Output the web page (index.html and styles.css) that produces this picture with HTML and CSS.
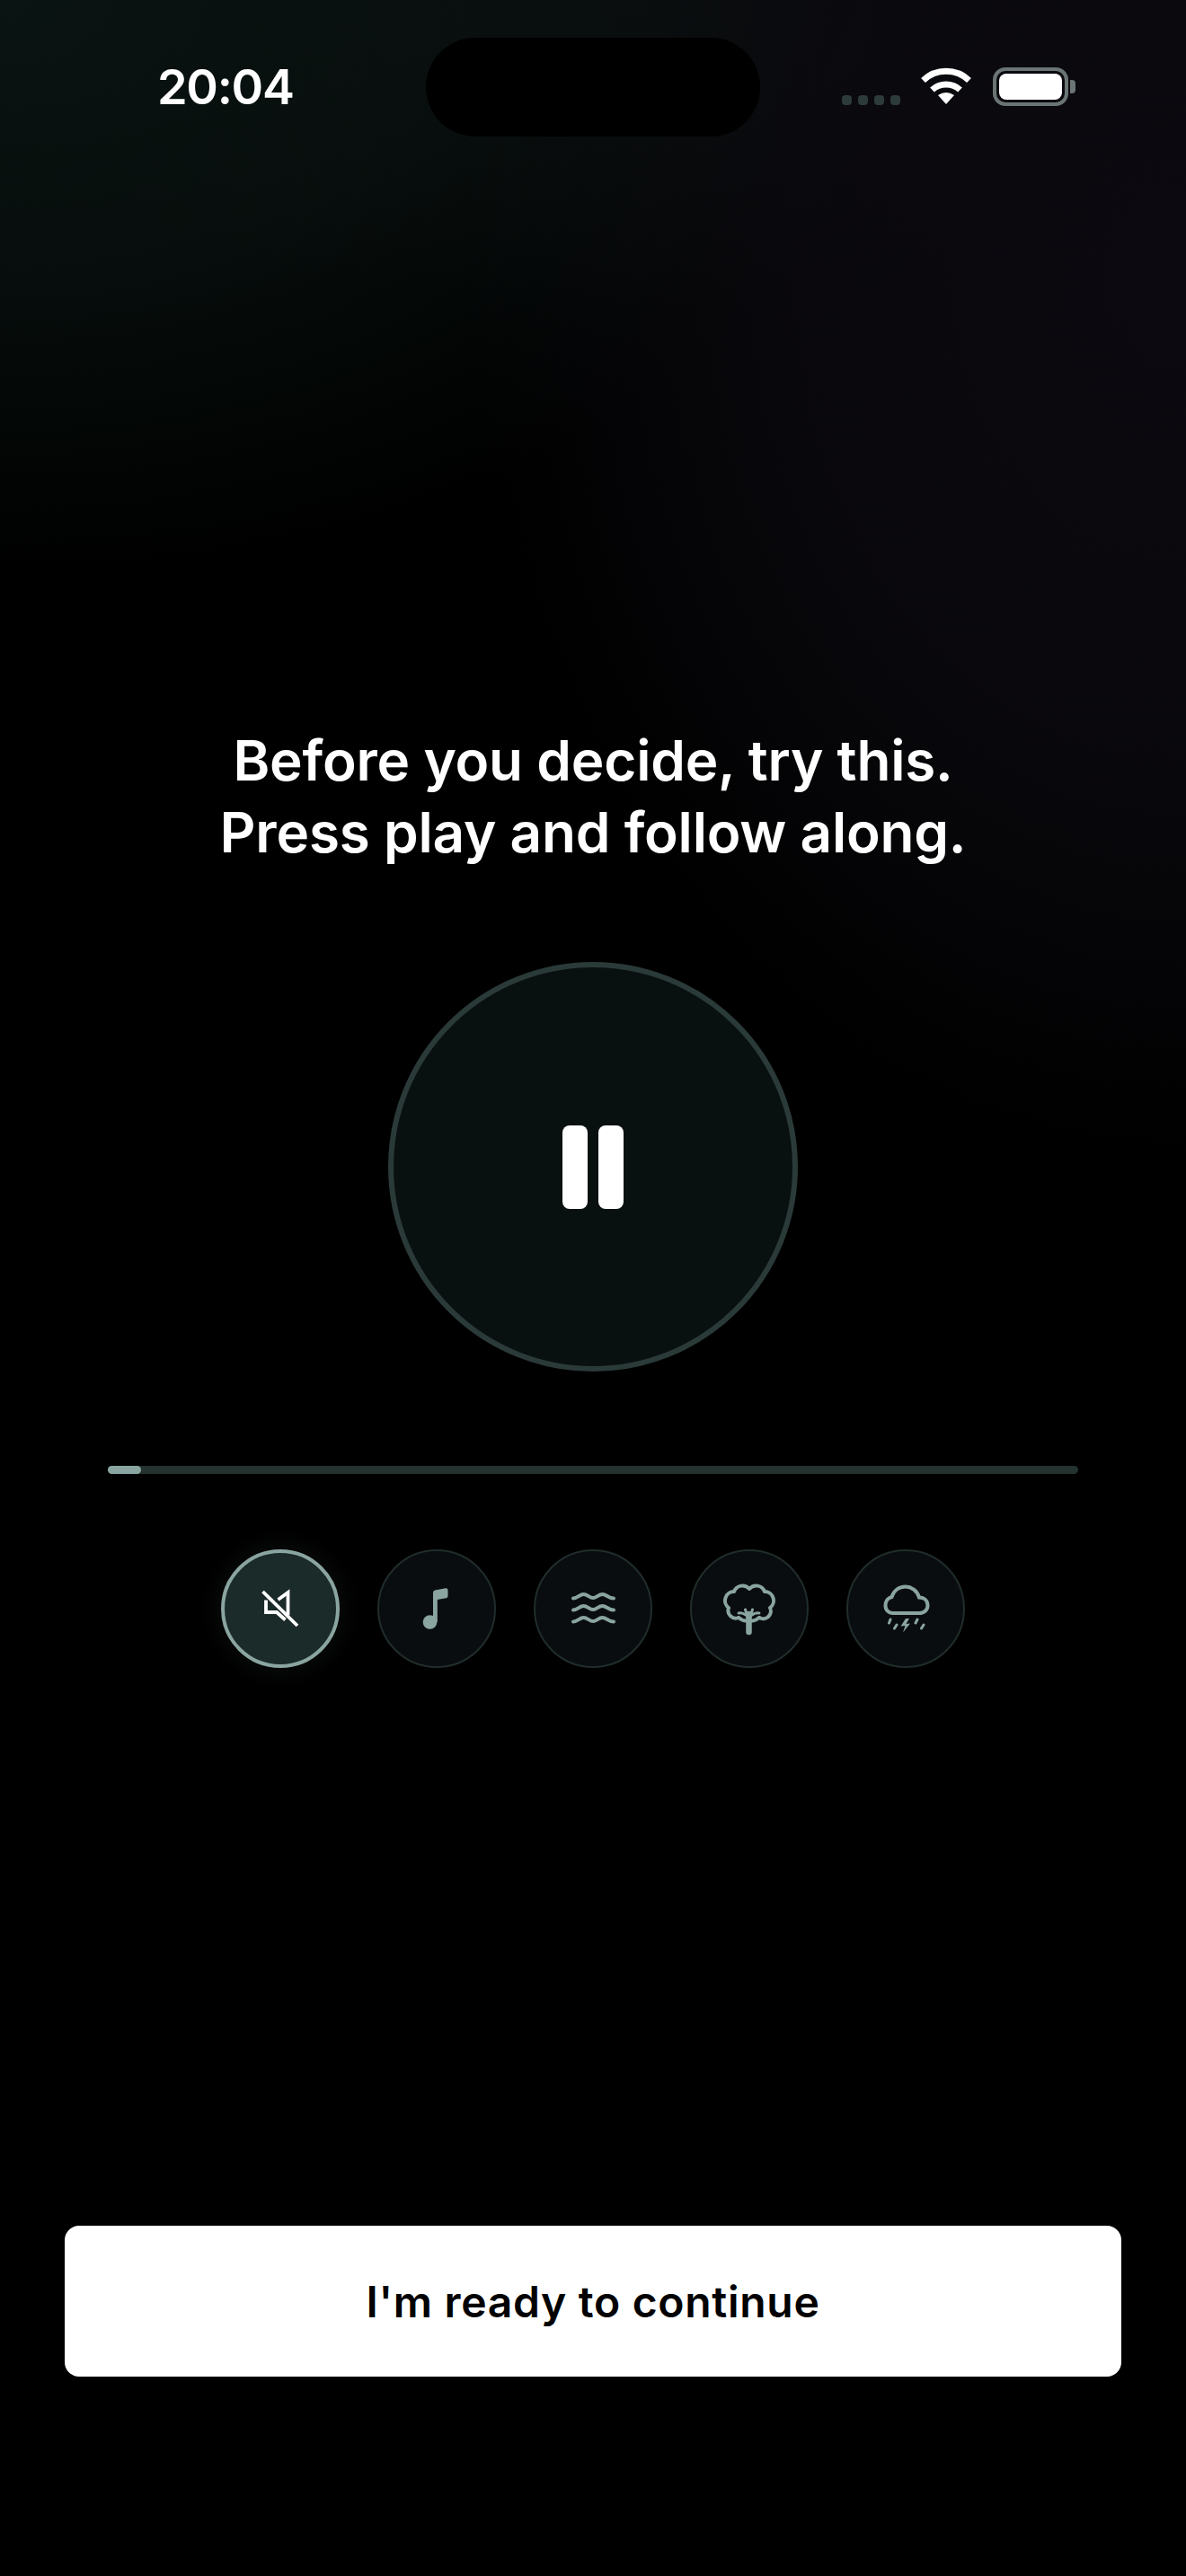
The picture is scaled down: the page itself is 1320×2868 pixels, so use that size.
FILE: index.html
```html
<!DOCTYPE html>
<html lang="en">
<head>
    <meta charset="UTF-8">
    <meta name="viewport" content="width=device-width, initial-scale=1.0">
    <title>Before you decide</title>
    <link rel="stylesheet" href="styles.css">
</head>
<body>

    <div class="status-bar">
        <div class="time">20:04</div>
        <div class="island"></div>
        <div class="status-icons">
            <div class="signal"><span></span><span></span><span></span><span></span></div>
            <svg class="wifi" width="58" height="41" viewBox="0 0 58 41">
                <path d="M3.500 14.500A37 37 0 0 1 54.500 14.500" fill="none" stroke="#fff" stroke-width="7"/>
                <path d="M13.500 25A23 23 0 0 1 44.500 25" fill="none" stroke="#fff" stroke-width="7"/>
                <path d="M29 41L20 31Q29 25 38 31Z" fill="#fff"/>
            </svg>
            <div class="battery"><div class="battery-level"></div></div>
        </div>
    </div>

    <h1 class="title">Before you decide, try this.<br>Press play and follow along.</h1>

    <button class="play">
        <span class="pause-bar"></span>
        <span class="pause-bar"></span>
    </button>

    <div class="progress"><div class="progress-fill"></div></div>

    <div class="sounds">
        <!-- mute -->
        <button class="sound active">
            <svg viewBox="0 0 132 132" fill="none" stroke="#fff" stroke-width="3.800">
                <path d="M46.500 47L85 85"/>
                <path d="M63.500 56L74.500 48V73"/>
                <path d="M50 56.500V70H62L71.500 78.500"/>
            </svg>
        </button>
        <!-- music -->
        <button class="sound">
            <svg viewBox="0 0 132 132" fill="#8aa5a0">
                <path d="M62 48Q62 46 64 45.500L76 43.300Q78.500 43 78.500 45.500V52Q78.500 53.800 76.500 54.200L66.800 56V81H62Z"/>
                <circle cx="58.500" cy="81" r="7.800"/>
            </svg>
        </button>
        <!-- waves -->
        <button class="sound">
            <svg viewBox="0 0 132 132" fill="none" stroke="#8aa5a0" stroke-width="4" stroke-linecap="round">
                <path d="M44 54.500C49 54.500 51 50 55.500 50C60 50 62 54 66 54C70 54 72 50 76.500 50C81 50 83 54.500 89 54.500"/>
                <path d="M44 67.500C49 67.500 51 63 55.500 63C60 63 62 67 66 67C70 67 72 63 76.500 63C81 63 83 67.500 89 67.500"/>
                <path d="M44 80.500C49 80.500 51 76 55.500 76C60 76 62 80 66 80C70 80 72 76 76.500 76C81 76 83 80.500 89 80.500"/>
            </svg>
        </button>
        <!-- forest -->
        <button class="sound">
            <svg viewBox="0 0 132 132" fill="none" stroke="#8aa5a0" stroke-width="4" stroke-linecap="round" stroke-linejoin="round">
                <path d="M54 76A8.500 8.500 0 0 1 43 65A10 10 0 0 1 49 47A10 10 0 0 1 66 44A10 10 0 0 1 83 47A10 10 0 0 1 89 65A8.500 8.500 0 0 1 77 76"/>
                <path d="M54 76Q59 80 63 79.500M77 76Q72 80 68 79.500"/>
                <path d="M65.500 92V72" stroke-width="6.500"/>
                <path d="M64.500 77L61.500 67M66.500 77L69.500 67M62 73Q58 70 54 71M69 73Q73 70 77 71" stroke-width="3"/>
            </svg>
        </button>
        <!-- storm -->
        <button class="sound">
            <svg viewBox="0 0 132 132" fill="none" stroke="#8aa5a0" stroke-width="4" stroke-linecap="round">
                <path d="M52 71H81C87 71 90.500 67 90.500 62.500C90.500 57 86.500 53.500 81 53.500C79 46 72 41.500 66 41.500C58 41.500 52.500 46.500 50.500 53C46 54 43.500 58 43.500 62.500C43.500 67.500 47 71 52 71Z"/>
                <path d="M49 78L47.500 82M56 84L53.500 88M79 78L77 82M86 84L83.500 88" stroke-width="3"/>
                <path d="M66 77L60.500 85.500L65.500 85L63 92.500L71 82.500L66.500 83L70 77Z" fill="#8aa5a0" stroke="none"/>
            </svg>
        </button>
    </div>

    <div class="footer">
        <button class="continue">I'm ready to continue</button>
    </div>

</body>
</html>
```
FILE: styles.css
```css
* {
    box-sizing: border-box;
}
body {
    margin: 0;
    width: 1320px;
    height: 2868px;
    overflow: hidden;
    background-color: #000;
    background-image:
        radial-gradient(ellipse 1000px 640px at 0px 0px, #0a1412 0%, rgba(10, 20, 18, 0.65) 50%, rgba(10, 20, 18, 0) 100%),
        radial-gradient(ellipse 800px 1000px at 1320px 300px, #0c0a10 0%, rgba(12, 10, 16, 0.75) 55%, rgba(12, 10, 16, 0) 100%),
        radial-gradient(ellipse 800px 340px at 700px 0px, #090a0b 0%, rgba(9, 10, 11, 0) 100%);
    font-family: Inter, "Noto Sans", sans-serif;
    color: #fff;
}
button {
    border: none;
    padding: 0;
    font-family: inherit;
    cursor: pointer;
}

.status-bar {
    display: grid;
    grid-template-columns: 474px 372px 1fr;
    align-items: start;
    padding-top: 42px;
}
.time {
    padding-top: 23px;
    padding-left: 175px;
    font-size: 54px;
    font-weight: 600;
    line-height: 64px;
    letter-spacing: -1.300px;
}
.island {
    height: 110px;
    background: #000;
    border-radius: 55px;
}
.status-icons {
    display: flex;
    align-items: flex-start;
    padding-top: 33px;
    padding-left: 91px;
}
.signal {
    display: flex;
    gap: 7px;
    margin-top: 31px;
    margin-right: 22px;
}
.signal span {
    width: 11px;
    height: 11px;
    background: #2c3b39;
    border-radius: 4px;
}
.wifi {
    display: block;
    margin-right: 23px;
}
.battery {
    position: relative;
    width: 84px;
    height: 43px;
    padding: 3px;
    border: 4px solid #6b7574;
    border-radius: 14px;
}
.battery::after {
    content: "";
    position: absolute;
    left: 82px;
    top: 10px;
    width: 6px;
    height: 15px;
    background: #6b7574;
    border-radius: 0 4px 4px 0;
}
.battery-level {
    height: 100%;
    background: #fff;
    border-radius: 8px;
}

.title {
    margin: 655px 0 0;
    font-size: 62px;
    font-weight: 600;
    line-height: 80px;
    letter-spacing: -0.200px;
    text-align: center;
}

.play {
    display: flex;
    justify-content: center;
    align-items: center;
    gap: 12px;
    width: 456px;
    height: 456px;
    margin: 104px auto 0;
    background: #091110;
    border: 6px solid #2a3a38;
    border-radius: 50%;
}
.pause-bar {
    width: 28px;
    height: 93px;
    background: #fff;
    border-radius: 8px;
}

.progress {
    width: 1080px;
    height: 9px;
    margin: 105px auto 0;
    background: #243230;
    border-radius: 5px;
}
.progress-fill {
    width: 37px;
    height: 100%;
    background: #8aa5a0;
    border-radius: 5px;
}

.sounds {
    display: flex;
    justify-content: center;
    gap: 42px;
    margin-top: 84px;
}
.sound {
    width: 132px;
    height: 132px;
    background: #0a0d10;
    border: 2px solid #202d2b;
    border-radius: 50%;
    position: relative;
}
.sound svg {
    position: absolute;
    left: -2px;
    top: -2px;
    width: 132px;
    height: 132px;
}
.active {
    background: #1b2b29;
    border: 4px solid #8aa5a0;
    box-shadow: 0 0 30px rgba(138, 165, 160, 0.1);
}
.active svg {
    left: -4px;
    top: -4px;
}

.footer {
    margin-top: 621px;
    padding: 0 72px;
}
.continue {
    display: block;
    width: 100%;
    height: 168px;
    background: #fff;
    border-radius: 16px;
    color: #000;
    font-size: 48px;
    font-weight: 600;
    letter-spacing: 0.700px;
}
```
